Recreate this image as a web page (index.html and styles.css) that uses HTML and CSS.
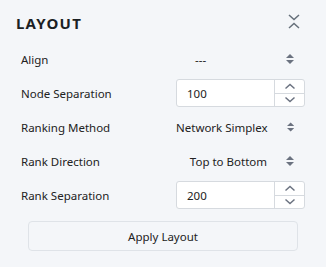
FILE: index.html
```html
<!DOCTYPE html>
<html lang="en">
<head>
    <meta charset="UTF-8">
    <meta name="viewport" content="width=device-width, initial-scale=1.0">
    <title>Layout</title>
    <link rel="stylesheet" href="styles.css">
</head>
<body>
    <div class="panel">
        <div class="panel-header">
            <h2>LAYOUT</h2>
            <svg class="collapse" width="12" height="15" viewBox="0 0 12 15">
                <path d="M1 1 L6 5.5 L11 1 M1 14 L6 9.5 L11 14" fill="none" stroke="#66707b" stroke-width="1.5"/>
            </svg>
        </div>

        <div class="row">
            <span class="label">Align</span>
            <div class="select center">
                <span class="value">---</span>
                <svg class="updown" width="8" height="12" viewBox="0 0 8 12"><path d="M0 5 L4 1 L8 5 Z M0 7 L4 11 L8 7 Z" fill="#6b7280"/></svg>
            </div>
        </div>

        <div class="row">
            <span class="label">Node Separation</span>
            <div class="number">
                <span class="value">100</span>
                <div class="spin">
                    <div class="half"><svg width="12" height="7" viewBox="0 0 12 7"><path d="M1.5 5.5 L6 1.5 L10.5 5.5" fill="none" stroke="#6b7280" stroke-width="1.5"/></svg></div>
                    <div class="half"><svg width="12" height="7" viewBox="0 0 12 7"><path d="M1.5 1.5 L6 5.5 L10.5 1.5" fill="none" stroke="#6b7280" stroke-width="1.5"/></svg></div>
                </div>
            </div>
        </div>

        <div class="row">
            <span class="label">Ranking Method</span>
            <div class="select">
                <span class="value">Network Simplex</span>
                <svg class="updown" width="8" height="12" viewBox="0 0 8 12"><path d="M0 5 L4 1 L8 5 Z M0 7 L4 11 L8 7 Z" fill="#6b7280"/></svg>
            </div>
        </div>

        <div class="row">
            <span class="label">Rank Direction</span>
            <div class="select">
                <span class="value">Top to Bottom</span>
                <svg class="updown" width="8" height="12" viewBox="0 0 8 12"><path d="M0 5 L4 1 L8 5 Z M0 7 L4 11 L8 7 Z" fill="#6b7280"/></svg>
            </div>
        </div>

        <div class="row">
            <span class="label">Rank Separation</span>
            <div class="number">
                <span class="value">200</span>
                <div class="spin">
                    <div class="half"><svg width="12" height="7" viewBox="0 0 12 7"><path d="M1.5 5.5 L6 1.5 L10.5 5.5" fill="none" stroke="#6b7280" stroke-width="1.5"/></svg></div>
                    <div class="half"><svg width="12" height="7" viewBox="0 0 12 7"><path d="M1.5 1.5 L6 5.5 L10.5 1.5" fill="none" stroke="#6b7280" stroke-width="1.5"/></svg></div>
                </div>
            </div>
        </div>

        <button class="apply">Apply Layout</button>
    </div>
</body>
</html>
```

FILE: styles.css
```css
body {
    margin: 0;
    background-color: #f4f6f9;
    font-family: "Noto Sans", "Open Sans", sans-serif;
    font-size: 11.5px;
    color: #222;
}
.panel {
    padding: 10px 16px 16px 16px;
}
.panel-header {
    display: flex;
    align-items: center;
    justify-content: space-between;
    height: 26px;
    margin-bottom: 6px;
}
.panel-header h2 {
    margin: 0;
    font-size: 15px;
    font-weight: bold;
    letter-spacing: 1.2px;
    color: #1b1f24;
}
.collapse {
    margin: 0 10px 3px 0;
}
.row {
    display: grid;
    grid-template-columns: 155px 129px;
    align-items: center;
    height: 34px;
    padding-left: 5px;
}
.select {
    display: flex;
    align-items: center;
    justify-content: flex-end;
    gap: 19px;
    padding-right: 11px;
    white-space: nowrap;
}
.select.center {
    justify-content: space-between;
    padding-left: 19px;
}
.number {
    display: flex;
    height: 28px;
    background-color: #fff;
    border: 1px solid #d6dadf;
    border-radius: 3px;
    box-sizing: border-box;
}
.number .value {
    flex: 1;
    display: flex;
    align-items: center;
    padding-left: 10px;
}
.spin {
    width: 29px;
    display: flex;
    flex-direction: column;
    border-left: 1px solid #d6dadf;
}
.half {
    flex: 1;
    display: flex;
    align-items: center;
    justify-content: center;
}
.half + .half {
    border-top: 1px solid #d6dadf;
}
.apply {
    display: block;
    width: 270px;
    height: 30px;
    margin: 9px 0 0 12px;
    background-color: #f4f6f9;
    border: 1px solid #dfe3e8;
    border-radius: 4px;
    font-family: inherit;
    font-size: 11.5px;
    color: #222;
}
```
